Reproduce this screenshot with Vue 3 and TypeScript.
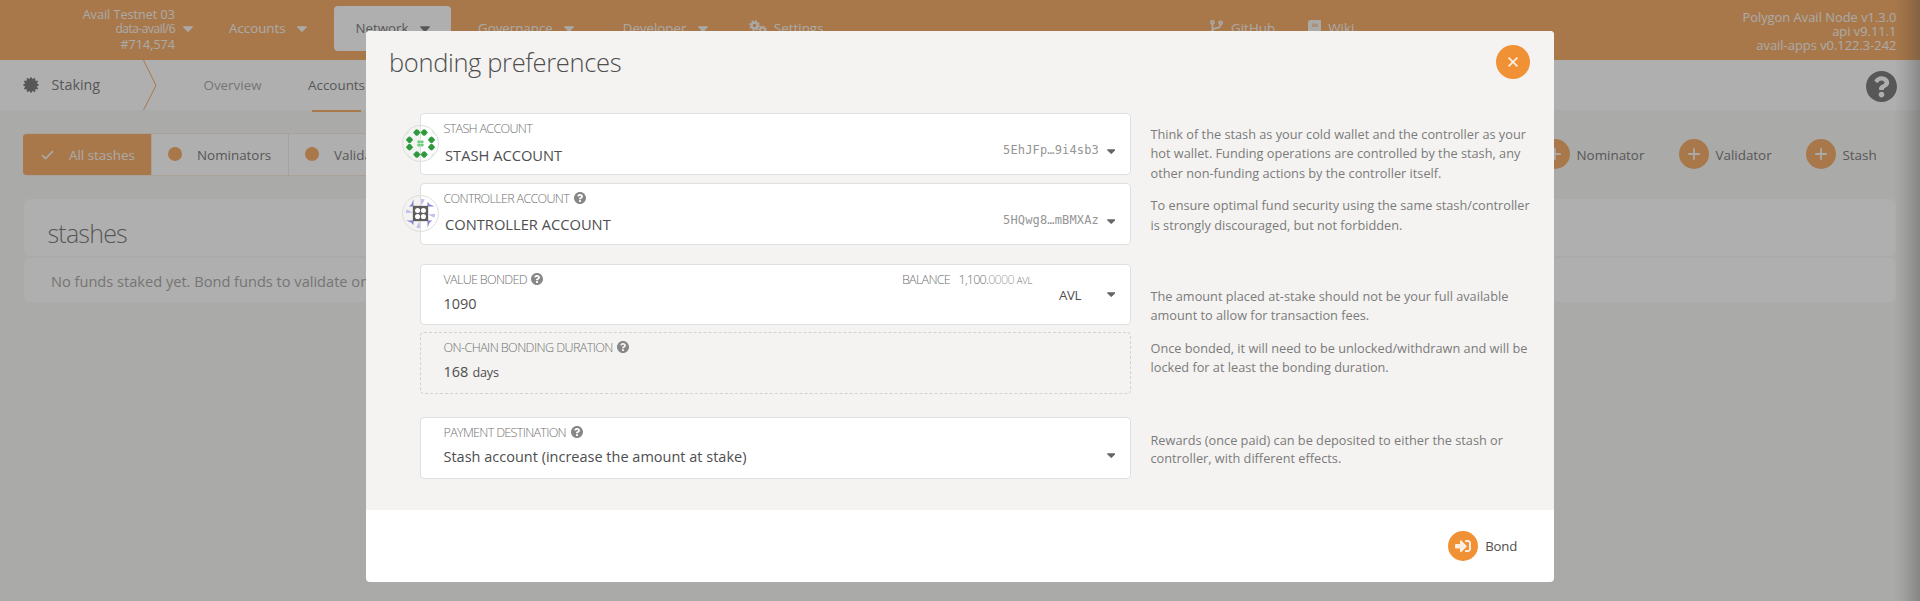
<script setup lang="ts">
interface NavItem { label: string; active?: boolean }
interface Field {
  kind: string
  label: string
  value: string
  unit?: string
  help: boolean
  icon?: 'green' | 'purple'
  address?: string
  balance?: boolean
  caret: boolean
}
interface Group { name: string; fields: Field[]; notes: string[][] }

const nav: NavItem[] = [
  { label: 'Accounts' },
  { label: 'Network', active: true },
  { label: 'Governance' },
  { label: 'Developer' },
]

const actions: string[] = ['Nominator', 'Validator', 'Stash']

const groups: Group[] = [
  {
    name: 'accounts',
    fields: [
      { kind: 'stash', label: 'stash account', value: 'STASH ACCOUNT', help: false, icon: 'green', address: '5EhJFp…9i4sb3', caret: true },
      { kind: 'controller', label: 'controller account', value: 'CONTROLLER ACCOUNT', help: true, icon: 'purple', address: '5HQwg8…mBMXAz', caret: true },
    ],
    notes: [
      ['Think of the stash as your cold wallet and the controller as your', 'hot wallet. Funding operations are controlled by the stash, any', 'other non-funding actions by the controller itself.'],
      ['To ensure optimal fund security using the same stash/controller', 'is strongly discouraged, but not forbidden.'],
    ],
  },
  {
    name: 'amount',
    fields: [
      { kind: 'bonded', label: 'value bonded', value: '1090', help: true, balance: true, caret: true },
      { kind: 'duration', label: 'on-chain bonding duration', value: '168', unit: 'days', help: true, caret: false },
    ],
    notes: [
      ['The amount placed at-stake should not be your full available', 'amount to allow for transaction fees.'],
      ['Once bonded, it will need to be unlocked/withdrawn and will be', 'locked for at least the bonding duration.'],
    ],
  },
  {
    name: 'payment',
    fields: [
      { kind: 'destination', label: 'payment destination', value: 'Stash account (increase the amount at stake)', help: true, caret: true },
    ],
    notes: [['Rewards (once paid) can be deposited to either the stash or', 'controller, with different effects.']],
  },
]

const caretPath = 'M31.3 192h257.3c17.8 0 26.7 21.5 14.1 34.1L174.1 354.8c-7.8 7.8-20.5 7.8-28.3 0L17.2 226.1C4.6 213.5 13.5 192 31.3 192z'
const helpPath = 'M504 256c0 136.997-111.043 248-248 248S8 392.997 8 256C8 119.083 119.043 8 256 8s248 111.083 248 248zM262.655 90c-54.497 0-89.255 22.957-116.549 63.758-3.536 5.286-2.353 12.415 2.715 16.258l34.699 26.31c5.205 3.947 12.621 3.008 16.665-2.122 17.864-22.658 30.113-35.797 57.303-35.797 20.429 0 45.698 13.148 45.698 32.958 0 14.976-12.363 22.667-32.534 33.976C247.128 238.528 216 254.941 216 296v4c0 6.627 5.373 12 12 12h56c6.627 0 12-5.373 12-12v-1.333c0-28.462 83.186-29.647 83.186-106.667 0-58.002-60.165-102-116.531-102zM256 338c-25.365 0-46 20.635-46 46 0 25.364 20.635 46 46 46s46-20.636 46-46c0-25.364-20.635-46-46-46z'
const signInPath = 'M416 448h-84c-6.6 0-12-5.4-12-12v-40c0-6.6 5.4-12 12-12h84c17.7 0 32-14.3 32-32V160c0-17.7-14.3-32-32-32h-84c-6.6 0-12-5.4-12-12V76c0-6.6 5.4-12 12-12h84c53 0 96 43 96 96v192c0 53-43 96-96 96zm-47-201L201 79c-15-15-41-4.5-41 17v96H24c-13.3 0-24 10.7-24 24v96c0 13.3 10.7 24 24 24h136v96c0 21.5 26 32 41 17l168-168c9.3-9.4 9.3-24.6 0-34z'

const teeth = 12
const badgePoints: string = Array.from({ length: teeth * 2 }, (_, i) => {
  const r = i % 2 === 0 ? 8.3 : 6.1
  const a = (Math.PI * i) / teeth
  return `${(8 + r * Math.sin(a)).toFixed(2)},${(8 - r * Math.cos(a)).toFixed(2)}`
}).join(' ')

const ring: [number, number][] = [[-11, -33], [11, -33], [-33, -11], [-33, 11], [33, -11], [33, 11], [-11, 33], [11, 33]]
</script>

<template>
  <div class="app">
    <header class="topbar">
      <div class="nav-area">
        <div class="chain">
          <div class="chain-name">Avail Testnet 03</div>
          <div class="chain-spec">data-avail/6</div>
          <div class="chain-block">#714,574</div>
        </div>
        <svg class="caret chain-caret" viewBox="10 188 300 176"><path :d="caretPath" /></svg>
        <nav class="nav">
          <div v-for="item in nav" :key="item.label" class="nav-item" :class="{ active: item.active }">
            <span>{{ item.label }}</span>
            <svg class="caret" viewBox="10 188 300 176"><path :d="caretPath" /></svg>
          </div>
        </nav>
        <div class="link settings">
          <svg class="cogs" viewBox="0 0 18 15">
            <g fill="none" stroke="currentColor">
              <circle cx="5.5" cy="5.5" r="2.9" stroke-width="2.2" />
              <circle cx="5.5" cy="5.5" r="4.5" stroke-width="1.6" stroke-dasharray="1.9 1.63" />
              <circle cx="13.5" cy="10" r="2.3" stroke-width="1.8" />
              <circle cx="13.5" cy="10" r="3.7" stroke-width="1.3" stroke-dasharray="1.6 1.3" />
            </g>
          </svg>
          <span>Settings</span>
        </div>
      </div>
      <div class="link">
        <svg class="branch" viewBox="0 0 13 15">
          <g fill="none" stroke="currentColor" stroke-width="1.7">
            <circle cx="2.4" cy="2.4" r="1.5" /><circle cx="10.6" cy="2.8" r="1.5" /><circle cx="2.4" cy="12.6" r="1.5" />
            <path d="M2.4 4v7M10.6 4.4c0 3.4-2 3.4-4.4 3.7S2.4 9 2.4 10.5" />
          </g>
        </svg>
        <span>GitHub</span>
      </div>
      <div class="link wiki">
        <svg class="book" viewBox="0 0 13 15">
          <path fill="currentColor" fill-rule="evenodd" d="M2.6 0H12.3q.7 0 .7.7V10q0 .4-.4.7v2.3q.4.2.4.6v.7q0 .7-.7.7H2.6Q0 15 0 12.4V2.6Q0 0 2.6 0ZM4 3.7v.8h6v-.8ZM4 5.6v.8h6v-.8ZM2.8 11.2q-.9 0-.9.9t.9.9H11v-1.8Z" />
        </svg>
        <span>Wiki</span>
      </div>
      <div class="versions">
        <div>Polygon Avail Node v1.3.0</div>
        <div>api v9.11.1</div>
        <div>avail-apps v0.122.3-242</div>
      </div>
    </header>

    <div class="tabs">
      <div class="section-name">
        <svg class="badge" viewBox="0 0 16 16"><polygon :points="badgePoints" /></svg>
        <span>Staking</span>
      </div>
      <svg class="chevron" viewBox="0 0 14 50"><path d="M.5 0 13 25.5 .5 50" /></svg>
      <div class="tab">Overview</div>
      <div class="tab current">Accounts</div>
      <svg class="help-large" viewBox="8 8 496 496"><path :d="helpPath" /></svg>
    </div>

    <main class="content">
      <div class="toolbar">
        <div class="filter">
          <div class="option selected">
            <svg class="check" viewBox="0 0 13 10"><path d="M1 5 4.6 8.6 12 1.2" /></svg>
            <span>All stashes</span>
          </div>
          <div class="option"><i class="dot" /><span>Nominators</span></div>
          <div class="option"><i class="dot" /><span>Validators</span></div>
        </div>
        <div class="actions">
          <div v-for="a in actions" :key="a" class="action" :class="a.toLowerCase()">
            <svg class="round" viewBox="0 0 30 30"><circle cx="15" cy="15" r="15" /><path d="M15 9.2v11.6M9.2 15h11.6" /></svg>
            <span>{{ a }}</span>
          </div>
        </div>
      </div>
      <section class="card heading">stashes</section>
      <section class="card empty">No funds staked yet. Bond funds to validate or nominate</section>
    </main>

    <div class="side-shade" />
    <div class="overlay">
      <div class="modal">
        <div class="modal-body">
          <div class="modal-head">
            <h1>bonding preferences</h1>
            <svg class="close" viewBox="0 0 34 34"><circle cx="17" cy="17" r="17" /><path d="m12.6 12.6 8.8 8.8M21.4 12.6l-8.8 8.8" /></svg>
          </div>
          <div v-for="g in groups" :key="g.name" class="group" :class="g.name">
            <div class="fields">
              <div v-for="f in g.fields" :key="f.kind" class="field" :class="f.kind">
                <svg v-if="f.icon === 'green'" class="identicon" viewBox="-55.5 -55.5 111 111">
                  <circle class="rim" r="53.8" />
                  <path v-for="(p, i) in ring" :key="i" class="leaf" :transform="`translate(${p[0]} ${p[1]})`" d="M-11 0-4-8Q0-12 4-8L11 0 4 8Q0 12-4 8Z" />
                  <g class="sprout">
                    <rect x="-9" y="-9" width="8.4" height="8.4" rx="2" /><rect x=".6" y="-9" width="8.4" height="8.4" rx="2" />
                    <rect x="-9" y=".6" width="8.4" height="8.4" rx="2" /><rect x=".6" y=".6" width="8.4" height="8.4" rx="2" />
                  </g>
                  <path class="wisp" d="M-43-25-36-38-32-40-40-26ZM43-25 36-38 32-40 40-26ZM-43 25-33 42-26 44-38 32ZM43 22 38 36 28 42 38 30Z" />
                </svg>
                <svg v-else-if="f.icon === 'purple'" class="identicon" viewBox="-55.5 -55.5 111 111">
                  <circle class="rim" r="53.8" />
                  <g v-for="r in [0, 90, 180, 270]" :key="r" :transform="`rotate(${r})`">
                    <path class="petal-dark" d="M-21-43V-21H-35L-27-28Z" />
                    <path class="petal" d="M1-44 13-42 3-23Z" />
                  </g>
                  <rect class="core" x="-23" y="-23" width="46" height="46" />
                  <g class="core-dots"><circle cx="-8.8" cy="-8.8" r="7.6" /><circle cx="8.8" cy="-8.8" r="7.6" /><circle cx="-8.8" cy="8.8" r="7.6" /><circle cx="8.8" cy="8.8" r="7.6" /></g>
                </svg>
                <div class="field-main">
                  <div class="label-row">
                    <span class="label">{{ f.label }}</span>
                    <svg v-if="f.help" class="help" viewBox="8 8 496 496"><path :d="helpPath" /></svg>
                    <span v-if="f.balance" class="balance">
                      <span class="label">balance</span>
                      <span class="sum">1,100.<span class="faint">0000</span></span>
                      <span class="token">AVL</span>
                    </span>
                  </div>
                  <div class="value">{{ f.value }}<span v-if="f.unit" class="unit">{{ f.unit }}</span></div>
                </div>
                <div v-if="f.address" class="address">{{ f.address }}</div>
                <div v-if="f.balance" class="denom">AVL</div>
                <svg v-if="f.caret" class="caret field-caret" viewBox="10 188 300 176"><path :d="caretPath" /></svg>
              </div>
            </div>
            <div class="notes">
              <p v-for="(n, i) in g.notes" :key="i"><span v-for="l in n" :key="l">{{ l }}</span></p>
            </div>
          </div>
        </div>
        <footer class="modal-foot">
          <svg class="round" viewBox="0 0 30 30">
            <circle cx="15" cy="15" r="15" />
            <svg x="7" y="7" width="16" height="16" viewBox="0 0 512 512"><path class="solid" :d="signInPath" /></svg>
          </svg>
          <span>Bond</span>
        </footer>
      </div>
    </div>
  </div>
</template>

<style>
body { margin: 0; overflow: hidden; }
</style>

<style scoped>
* { box-sizing: border-box; }
svg { display: block; flex: none; }
.app {
  position: relative;
  width: 1920px;
  height: 601px;
  overflow: hidden;
  background: #f5f4f2;
  color: #4e4e4e;
  font-family: "Open Sans", "Noto Sans", sans-serif;
  font-size: 13.4px;
  line-height: 20px;
  white-space: nowrap;
}
.caret { width: 10px; height: 6px; fill: currentColor; }

.topbar { display: flex; height: 60px; background: #f19135; color: #f5f3f1; }
.nav-area { display: flex; width: 1210px; }
.chain { width: 175px; padding-top: 7px; text-align: right; font-size: 12.6px; }
.chain-name { line-height: 16px; }
.chain-spec { font-size: 12px; line-height: 12px; letter-spacing: -.5px; }
.chain-block { line-height: 20px; }
.chain-caret { margin: 26px 14px 0 8px; }
.nav { display: flex; gap: 4.5px; padding-top: 6px; font-size: 13.3px; }
.nav-item { display: flex; align-items: center; gap: 11.5px; height: 45px; padding: 0 22px; border-radius: 4px; }
.nav-item span { margin-top: -1px; }
.nav-item.active { padding-right: 21.5px; background: #fff; color: #4e4e4e; }
.link { display: flex; gap: 8px; height: 55px; align-items: center; }
.settings { margin-left: 19px; gap: 7px; }
.cogs { width: 18px; height: 15px; }
.branch, .book { width: 13px; height: 15px; }
.wiki { margin-left: 33px; gap: 7px; }
.versions { margin-left: auto; padding: 9.5px 23.5px 0 0; text-align: right; font-size: 12.9px; line-height: 14.4px; }

.tabs { display: flex; height: 50px; background: #fff; }
.section-name { display: flex; align-items: center; gap: 13px; width: 143px; padding-left: 22.5px; font-size: 14.3px; }
.badge { width: 16px; height: 16px; fill: #4e4e4e; }
.chevron { width: 14px; height: 50px; fill: none; stroke: #f19135; }
.tab { margin-left: 46.5px; padding-top: 14.5px; color: #8b8b8b; }
.tab.current { position: relative; color: #4e4e4e; }
.tab.current::after { content: ""; position: absolute; left: 4px; bottom: -2px; width: 49px; height: 2px; background: #f19135; }
.help-large { width: 31px; height: 31px; margin: 11px 23px 0 auto; fill: #4e4e4e; }

.content { padding: 23px 24px 0; }
.toolbar { display: flex; justify-content: space-between; height: 43px; margin-left: -1px; }
.filter { display: flex; border: 1px solid #f3e4d6; border-left: 0; border-radius: 4px; background: #fff; overflow: hidden; height: 43px; }
.option { display: flex; align-items: center; gap: 15px; width: 137px; padding-left: 16px; border-left: 1px solid #f3e4d6; }
.option span { margin-top: 1px; }
.option.selected { width: 128px; margin: -1px 0; padding-left: 18px; border: 0; background: #f19135; color: #f5f3f1; }
.check { width: 13px; height: 10px; fill: none; stroke: currentColor; stroke-width: 1.7; }
.dot { width: 14px; height: 14px; margin-top: -2px; border-radius: 50%; background: #f19135; }
.actions { display: flex; padding-top: 6px; }
.action { display: flex; gap: 6.5px; }
.action span { padding-top: 6px; }
.action.nominator { width: 139px; }
.action.validator { width: 127px; }
.action.stash { width: 90px; }
.round { width: 30px; height: 30px; fill: #f19135; stroke: #f5f3f1; stroke-width: 1.8; }
.round circle { stroke: none; }
.card { border-radius: 6px; background: #fefefe; }
.heading { height: 57px; margin-top: 23px; padding: 24px 23.5px 0; font-size: 25px; font-weight: 300; line-height: 20px; letter-spacing: -.8px; }
.empty { height: 44px; margin-top: 2px; padding: 13px 27px 0; font-size: 14.6px; color: #8b8b8b; }

.side-shade { position: absolute; top: 0; right: 0; bottom: 0; width: 26px; background: linear-gradient(to right, rgba(0, 0, 0, 0), rgba(0, 0, 0, .1) 45%, rgba(0, 0, 0, .3)); }

.overlay { position: absolute; inset: 0; padding: 31px 0 0 366px; background: rgba(96, 96, 96, .5); }
.modal { width: 1188px; height: 551px; border-radius: 4px; overflow: hidden; background: #fff; }
.modal-body { height: 479px; background: #f4f3f1; }
.modal-head { display: flex; justify-content: space-between; height: 82px; padding: 14px 24px 0 23px; }
h1 { margin: 0; font-size: 25.5px; font-weight: 300; line-height: 34px; letter-spacing: -.35px; }
.close { width: 34px; height: 34px; fill: #f19135; }
.close path { stroke: #f8f0e6; stroke-width: 1.7; }

.group { display: flex; padding-left: 54px; }
.fields { display: flex; flex-direction: column; width: 711px; }
.accounts .fields { gap: 8px; }
.amount { padding-top: 19px; }
.amount .fields { gap: 7px; }
.payment { padding-top: 23px; }
.field { position: relative; display: flex; height: 62px; padding: 6px 15px 0 22.5px; border: 1px solid #dfdfdf; border-radius: 4px; background: #fff; }
.field.bonded { height: 61px; }
.field.duration { border: 1px dashed #d2d2d0; background: transparent; }
.identicon { position: absolute; left: -19px; top: 11px; width: 37px; height: 37px; }
.rim { fill: none; stroke: #dedddc; stroke-width: 3; }
.leaf { fill: #2e9a3d; }
.sprout { fill: #67cf78; }
.wisp { fill: #cfe9d3; }
.petal-dark { fill: #8682d3; }
.petal { fill: #c2c0ea; }
.core { fill: #5e5e5e; }
.core-dots { fill: #fff; }
.field-main { flex: 1; }
.label-row { display: flex; align-items: center; height: 16px; line-height: 17px; color: #8b8b8b; }
.label { font-size: 12.6px; font-weight: 300; letter-spacing: -.71px; text-transform: uppercase; color: #737373; }
.label-row > .label { padding-top: 1px; }
.duration .label { letter-spacing: -.6px; }
.help { width: 12px; height: 12px; margin-left: 4.5px; fill: #878787; }
.balance { display: flex; align-items: baseline; padding-top: 1px; margin-left: auto; margin-right: 27px; color: #737373; font-weight: 300; }
.balance .label { letter-spacing: -.75px; }
.sum { padding-left: 8.5px; font-size: 12.6px; letter-spacing: -.8px; }
.faint { opacity: .65; }
.token { margin-left: 3px; font-size: 9.6px; letter-spacing: -.3px; }
.value { margin-top: 6.5px; font-size: 14.5px; line-height: 20px; }
.stash .value, .controller .value { margin-left: 1.5px; font-size: 14.7px; }
.stash .value { margin-top: 9px; }
.controller .value { margin-top: 8px; }
.bonded .value { margin-top: 7px; }
.unit { margin-left: 4px; font-size: 12.6px; letter-spacing: -.15px; }
.address { padding-top: 20px; font-family: "DejaVu Sans Mono", "Liberation Mono", monospace; font-size: 12px; letter-spacing: .16px; color: #959595; }
.denom { padding: 14px 18px 0 0; font-size: 13.2px; letter-spacing: -.4px; }
.field-caret { width: 8.5px; height: 5.2px; margin: 29px 0 0 7.5px; color: #666; }
.bonded .field-caret { margin-top: 21px; }
.notes { padding: 12px 0 0 19.5px; font-size: 12.74px; line-height: 19.3px; color: #7b7b7b; }
.amount .notes { padding-top: 23px; }
.payment .notes { padding-top: 14px; }
.notes p { margin: 0; }
.notes p + p { margin-top: 13.5px; }
.notes span { display: block; }
.payment .notes span + span { margin-top: -1px; }

.modal-foot { display: flex; justify-content: flex-end; align-items: center; gap: 7px; height: 72px; padding-right: 37px; font-size: 13.2px; letter-spacing: -.2px; }
.solid { fill: #fbeee0; stroke: none; }
</style>
